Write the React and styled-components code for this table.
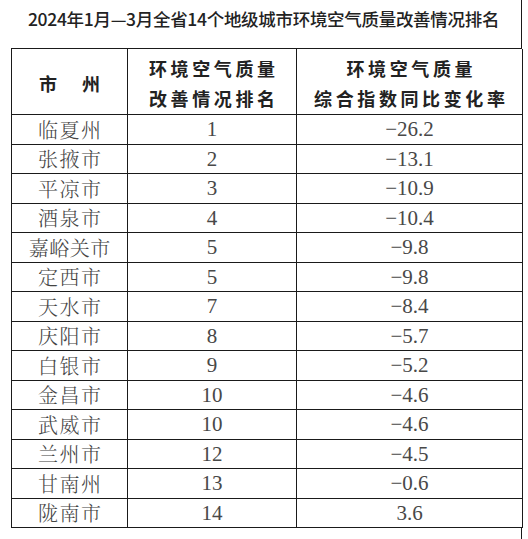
import React from "react";
import styled, { createGlobalStyle } from "styled-components";

const Global = createGlobalStyle`
  html, body { margin: 0; padding: 0; background: #fff; }
  body { width: 528px; height: 539px; overflow: hidden; }
`;

const Page = styled.div`
  width: 528px;
  height: 539px;
  display: flex;
  flex-direction: column;
  background: #fff;
`;

const TitleRow = styled.div`
  width: 522px;
  height: 48px;
  box-sizing: border-box;
  border-right: 1.5px solid #1a1a1a;
  padding: 6px 0 0 6px;
  text-align: center;
  font-family: "Noto Sans CJK SC", "Noto Sans", sans-serif;
  font-weight: 500;
  font-size: 17.5px;
  line-height: 26px;
  color: #222;
  letter-spacing: -0.3px;
`;

const Tail = styled.div`
  flex: 1;
  width: 522px;
  box-sizing: border-box;
  border-right: 1.5px solid #1a1a1a;
`;

const Table = styled.div`
  margin-left: 11px;
  width: 511px;
  box-sizing: border-box;
  border-top: 1.5px solid #1a1a1a;
  border-left: 1.5px solid #1a1a1a;
  display: grid;
  grid-template-columns: 116px 169px 226px;
  grid-template-rows: 66px repeat(14, 29.5px);
`;

const Cell = styled.div`
  box-sizing: border-box;
  border-right: 1.5px solid #1a1a1a;
  border-bottom: 1.5px solid #1a1a1a;
  display: flex;
  align-items: center;
  justify-content: center;
  overflow: hidden;
`;

const HeadCell = styled(Cell)`
  flex-direction: column;
  font-family: "Noto Sans CJK SC", "Noto Sans", sans-serif;
  font-weight: 700;
  font-size: 18px;
  line-height: 30px;
  color: #222;
  letter-spacing: 3.6px;
  padding-left: 3.6px;
  padding-top: 2px;
`;

const CityCell = styled(Cell)`
  font-family: "Noto Serif CJK SC", "Noto Sans CJK SC", serif;
  font-weight: 300;
  font-size: 20px;
  color: #444;
  letter-spacing: ${(p) => (p.$long ? "0.5px" : "1.5px")};
  padding-left: ${(p) => (p.$long ? "0.5px" : "1.5px")};
`;

const NumCell = styled(Cell)`
  font-family: "Liberation Serif", "Times New Roman", serif;
  font-size: 21px;
  color: #484848;
  padding-top: 1px;
`;

const rows = [
  ["临夏州", "1", "−26.2"],
  ["张掖市", "2", "−13.1"],
  ["平凉市", "3", "−10.9"],
  ["酒泉市", "4", "−10.4"],
  ["嘉峪关市", "5", "−9.8"],
  ["定西市", "5", "−9.8"],
  ["天水市", "7", "−8.4"],
  ["庆阳市", "8", "−5.7"],
  ["白银市", "9", "−5.2"],
  ["金昌市", "10", "−4.6"],
  ["武威市", "10", "−4.6"],
  ["兰州市", "12", "−4.5"],
  ["甘南州", "13", "−0.6"],
  ["陇南市", "14", "3.6"],
];

export default function App() {
  return (
    <Page>
      <Global />
      <TitleRow>2024年1月—3月全省14个地级城市环境空气质量改善情况排名</TitleRow>
      <Table>
        <HeadCell>
          <span>市　州</span>
        </HeadCell>
        <HeadCell>
          <span>环境空气质量</span>
          <span>改善情况排名</span>
        </HeadCell>
        <HeadCell>
          <span>环境空气质量</span>
          <span>综合指数同比变化率</span>
        </HeadCell>
        {rows.map(([city, rank, rate], i) => (
          <React.Fragment key={i}>
            <CityCell $long={city.length > 3}>{city}</CityCell>
            <NumCell>{rank}</NumCell>
            <NumCell>{rate}</NumCell>
          </React.Fragment>
        ))}
      </Table>
      <Tail />
    </Page>
  );
}
